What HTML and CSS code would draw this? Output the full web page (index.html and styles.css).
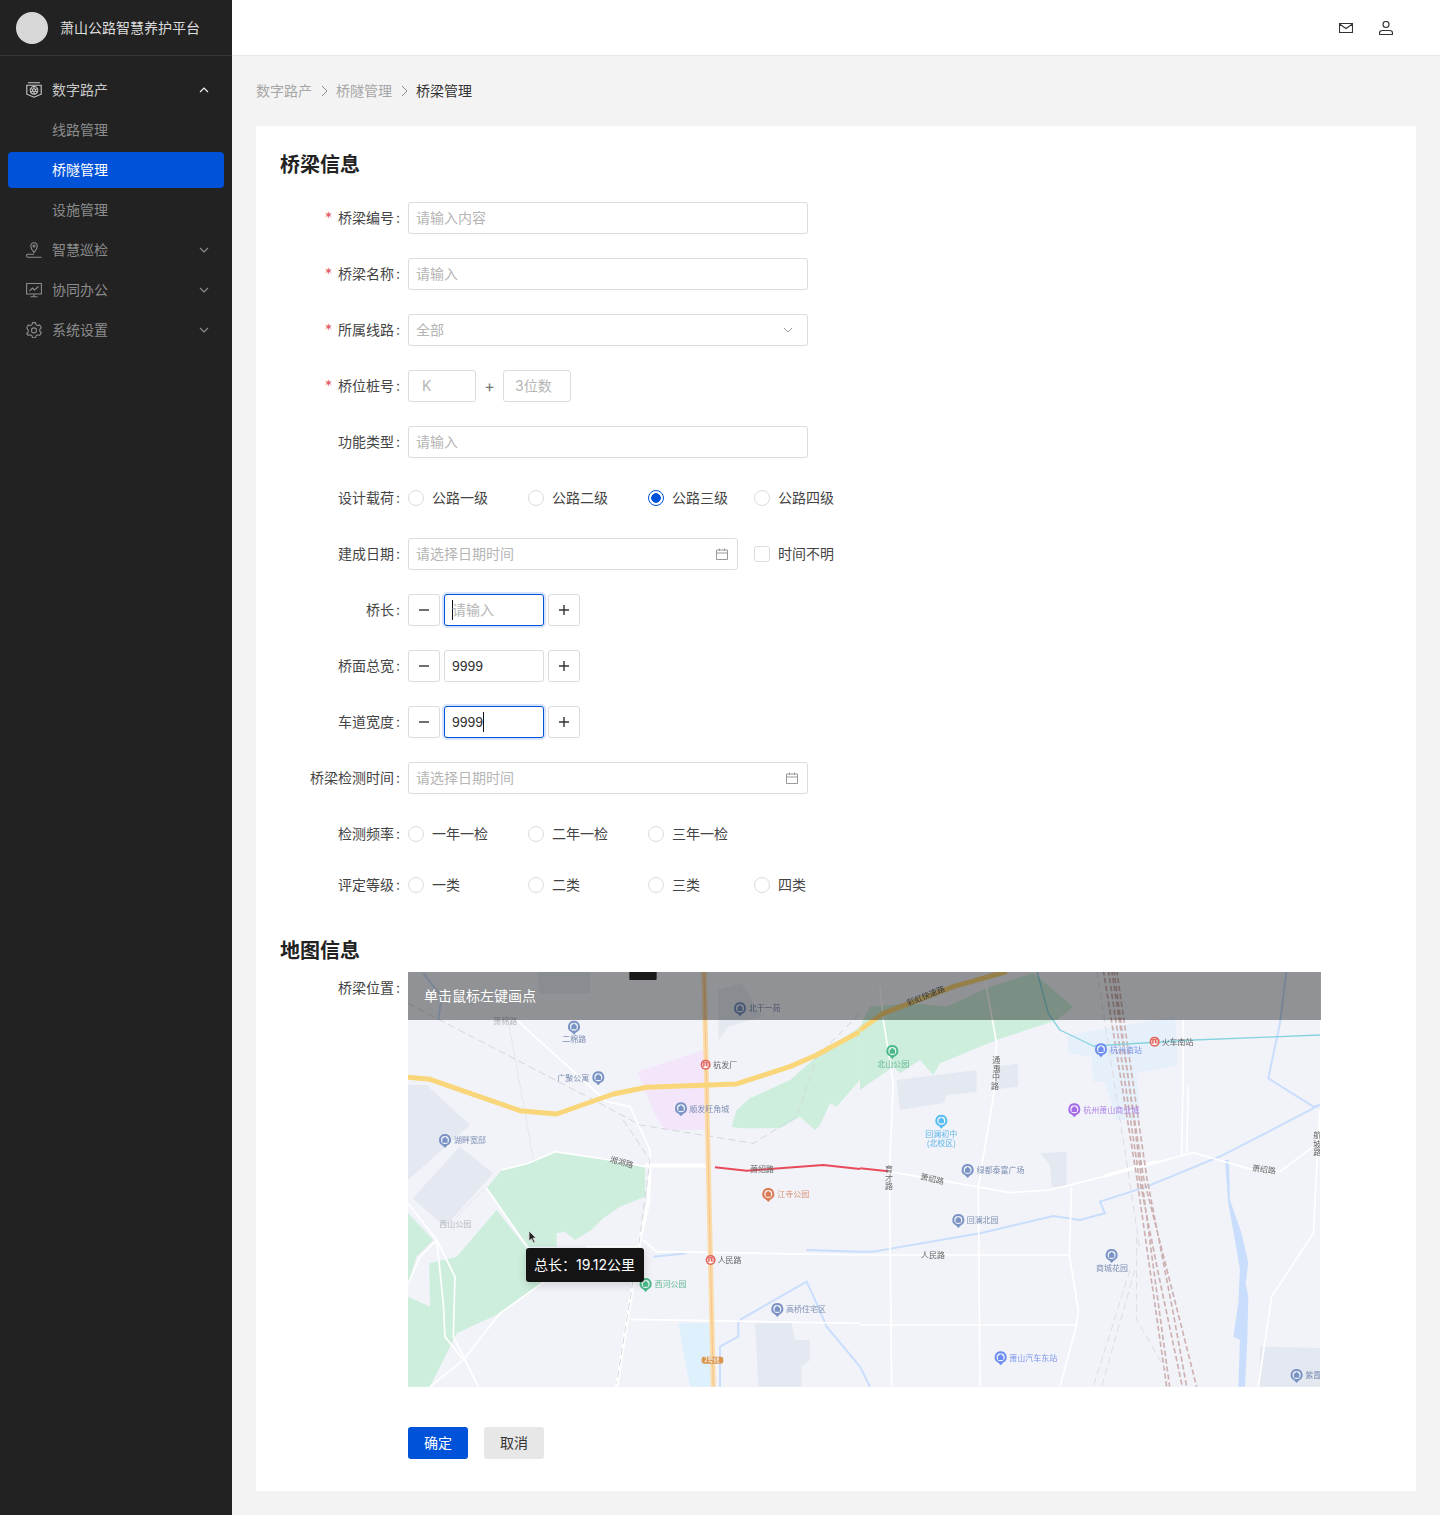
FILE: index.html
```html
<!DOCTYPE html>
<html lang="en">
<head>
  <meta charset="UTF-8" />
  <meta name="viewport" content="width=device-width, initial-scale=1.0"/>
  <title>萧山公路智慧养护平台</title>
  <link rel="stylesheet" href="styles.css">
</head>
<body>
  <aside class="sidebar">
    <div class="brand">
      <div class="avatar"></div>
      <span>萧山公路智慧养护平台</span>
    </div>
    <nav class="nav">
      <div class="nav-item open">
        <svg class="nav-icon" viewBox="0 0 16 16"><path d="M2 .8h12M.8 3.200h14.400v9L8 15.200l-7.200-3z"/><circle cx="8" cy="8.300" r="3.800"/><circle cx="8" cy="8.300" r="1.500"/><path d="M8 4.500v2.300M8 9.800v2.300M4.700 6.400l2 1.200M9.300 9l2 1.200M4.700 10.200l2-1.200M9.300 7.600l2-1.200"/></svg>
        <span>数字路产</span>
        <svg class="chevron" viewBox="0 0 10 6"><path d="M1 5l4-4 4 4"/></svg>
      </div>
      <div class="nav-item sub">线路管理</div>
      <div class="nav-item sub active">桥隧管理</div>
      <div class="nav-item sub">设施管理</div>
      <div class="nav-item">
        <svg class="nav-icon" viewBox="0 0 16 16"><path d="M8 10.500C6 8.500 4.800 6.800 4.800 4a3.200 3.200 0 0 1 6.400 0c0 2.800-1.200 4.500-3.200 6.500z"/><circle cx="8" cy="4" r="1"/><path d="M8 12.200H2a1.500 1.500 0 0 0 0 3h13.500"/></svg>
        <span>智慧巡检</span>
        <svg class="chevron" viewBox="0 0 10 6"><path d="M1 1l4 4 4-4"/></svg>
      </div>
      <div class="nav-item">
        <svg class="nav-icon" viewBox="0 0 16 16"><path d="M.6 1.500h14.800v10.500H.6zM8 12v2.800M4.500 14.800h7M3.500 9l3-3 2 2 4-3.500"/></svg>
        <span>协同办公</span>
        <svg class="chevron" viewBox="0 0 10 6"><path d="M1 1l4 4 4-4"/></svg>
      </div>
      <div class="nav-item">
        <svg class="nav-icon" viewBox="0 0 16 16"><path d="M6.500.6h3l.5 2 1.700 1 2-.6 1.600 2.800-1.500 1.400v2l1.500 1.400-1.600 2.800-2-.6-1.700 1-.5 2h-3l-.5-2-1.700-1-2 .6L.7 11.600l1.500-1.400v-2L.7 5.800l1.600-2.800 2 .6L6 2.600z"/><circle cx="8" cy="8.400" r="2.500"/></svg>
        <span>系统设置</span>
        <svg class="chevron" viewBox="0 0 10 6"><path d="M1 1l4 4 4-4"/></svg>
      </div>
    </nav>
  </aside>

  <div class="content">
    <header class="topbar">
      <svg class="top-icon mail" viewBox="0 0 14 10"><path d="M.5.500h13v9H.5zM.5 1l6.500 4.500L13.500 1"/></svg>
      <svg class="top-icon user" viewBox="0 0 14 14"><circle cx="7" cy="3.500" r="3"/><path d="M.5 13.500v-1.500c0-1.500 1.500-2.500 3-2.500h7c1.500 0 3 1 3 2.500v1.500z"/></svg>
    </header>

    <main class="main">
      <div class="breadcrumb">
        <span>数字路产</span>
        <svg class="crumb-sep" viewBox="0 0 24 12"><path d="M10 1l5 5-5 5"/></svg>
        <span>桥隧管理</span>
        <svg class="crumb-sep" viewBox="0 0 24 12"><path d="M10 1l5 5-5 5"/></svg>
        <span class="current">桥梁管理</span>
      </div>

      <section class="card">
        <h2 class="section-title">桥梁信息</h2>

        <div class="row">
          <label class="label required">桥梁编号<span>:</span></label>
          <div class="input wide placeholder">请输入内容</div>
        </div>
        <div class="row">
          <label class="label required">桥梁名称<span>:</span></label>
          <div class="input wide placeholder">请输入</div>
        </div>
        <div class="row">
          <label class="label required">所属线路<span>:</span></label>
          <div class="input wide placeholder">
            <span>全部</span>
            <svg class="select-arrow" viewBox="0 0 10 6"><path d="M1 1l4 4 4-4"/></svg>
          </div>
        </div>
        <div class="row">
          <label class="label required">桥位桩号<span>:</span></label>
          <div class="input short short-k placeholder">K</div>
          <span class="plus-sign">+</span>
          <div class="input short placeholder">3位数</div>
        </div>
        <div class="row">
          <label class="label">功能类型<span>:</span></label>
          <div class="input wide placeholder">请输入</div>
        </div>
        <div class="row">
          <label class="label">设计载荷<span>:</span></label>
          <div class="radios">
            <div class="radio"><i></i>公路一级</div>
            <div class="radio"><i></i>公路二级</div>
            <div class="radio checked"><i></i>公路三级</div>
            <div class="radio"><i></i>公路四级</div>
          </div>
        </div>
        <div class="row">
          <label class="label">建成日期<span>:</span></label>
          <div class="input date-short placeholder">
            <span>请选择日期时间</span>
            <svg class="calendar" viewBox="0 0 12 12"><path d="M.5 2h11v9.500H.5zM.5 5h11M3.500.5V3M8.500.5V3"/></svg>
          </div>
          <div class="checkbox"><i></i>时间不明</div>
        </div>
        <div class="row">
          <label class="label">桥长<span>:</span></label>
          <div class="stepper">
            <div class="step-btn"><svg class="step-icon" viewBox="0 0 10 10"><path d="M0 5h10"/></svg></div>
            <div class="input step-input focus placeholder"><b class="caret first"></b>请输入</div>
            <div class="step-btn"><svg class="step-icon" viewBox="0 0 10 10"><path d="M0 5h10M5 0v10"/></svg></div>
          </div>
        </div>
        <div class="row">
          <label class="label">桥面总宽<span>:</span></label>
          <div class="stepper">
            <div class="step-btn"><svg class="step-icon" viewBox="0 0 10 10"><path d="M0 5h10"/></svg></div>
            <div class="input step-input">9999</div>
            <div class="step-btn"><svg class="step-icon" viewBox="0 0 10 10"><path d="M0 5h10M5 0v10"/></svg></div>
          </div>
        </div>
        <div class="row">
          <label class="label">车道宽度<span>:</span></label>
          <div class="stepper">
            <div class="step-btn"><svg class="step-icon" viewBox="0 0 10 10"><path d="M0 5h10"/></svg></div>
            <div class="input step-input focus">9999<b class="caret"></b></div>
            <div class="step-btn"><svg class="step-icon" viewBox="0 0 10 10"><path d="M0 5h10M5 0v10"/></svg></div>
          </div>
        </div>
        <div class="row">
          <label class="label">桥梁检测时间<span>:</span></label>
          <div class="input wide placeholder">
            <span>请选择日期时间</span>
            <svg class="calendar" viewBox="0 0 12 12"><path d="M.5 2h11v9.500H.5zM.5 5h11M3.500.5V3M8.500.5V3"/></svg>
          </div>
        </div>
        <div class="row tight">
          <label class="label">检测频率<span>:</span></label>
          <div class="radios">
            <div class="radio"><i></i>一年一检</div>
            <div class="radio"><i></i>二年一检</div>
            <div class="radio"><i></i>三年一检</div>
          </div>
        </div>
        <div class="row last">
          <label class="label">评定等级<span>:</span></label>
          <div class="radios">
            <div class="radio"><i></i>一类</div>
            <div class="radio"><i></i>二类</div>
            <div class="radio"><i></i>三类</div>
            <div class="radio"><i></i>四类</div>
          </div>
        </div>

        <h2 class="section-title map-title">地图信息</h2>

        <div class="map-row">
          <label class="label">桥梁位置<span>:</span></label>
          <div class="map">
            <svg class="map-svg" viewBox="0 0 912 415">
              <defs>
                <symbol id="pin" viewBox="-20 -20 40 48" overflow="visible">
                  <path d="M0-18a18 18 0 0 1 7 34.600L0 24l-7-7.400A18 18 0 0 1 0-18z"/>
                  <circle r="12" fill="#fff" fill-opacity=".88"/>
                  <path d="M-8 8V-3L0-10l8 7V8z" fill="currentColor"/>
                </symbol>
                <symbol id="metro" viewBox="-18 -18 36 36" overflow="visible">
                  <circle r="15"/>
                  <circle r="10.500" fill="#fff"/>
                  <path d="M-7 7V-7H7V7M-2.500-7V5M2.500-7V5" fill="none" stroke="currentColor" stroke-width="3"/>
                </symbol>
              </defs>

              <!-- left half of the map -->
              <g transform="translate(-8,-2) scale(.3333)">
                <path class="block" d="M24 345h56l130 120L24 630z"/>
                <path class="block" d="M38 685L180 530l100 80-145 160z"/>
                <path class="block" d="M410 0h160v70l-150 0z"/>
                <path class="block" d="M955 60l70-20 60 100-100 30-30 40z"/>
                <path class="block" d="M1065 1060h110l10 50h45v60l-25 20v60h-130l-5-100z"/>
                <path class="water" d="M835 1060h105v190h-70z"/>
                <path class="pink" d="M712 305L910 240l10 240H795l-30-45z"/>
                <path class="green" d="M260 655l45-55 80-20 80-35 165 25 105 20v90l-75 30-50 35-35 35-50 30-30-25-25 5v40h-90z"/>
                <path class="green" d="M290 720l90 115 50 100-130 95-130 60-80 160H24V980l66 30-2-130 82-20z"/>
                <path class="green" d="M24 730l76 80-50 50-26 80z"/>
                <path class="green" d="M995 470l15-50 40-35 120-55 80-70 130-90v160l-70 80-20-10-30 65-15 15-45-40-60 35h-120z"/>
                <path class="river" d="M1380 845l-160-5M760 860l100-10M1020 1050l200-115 30 65 30 70 100 120"/>
                <path class="river" d="M960 1250v-120l55-30v-50M70 10l55 70-10 70"/>
                <path class="road" d="M24 700l86 110 55 110-5 180 75 150"/>
                <path class="road" d="M110 810l20 190 5 100 55 70M110 810l-50 50-35 80"/>
                <path class="road" d="M305 600l80-20 80-35 165 25 105 20h195M260 655l125 180M90 1250l100-80 110-140 140-100"/>
                <path class="road thick" d="M750 590l-5 110-25 110-70 440M735 585h180"/>
                <path class="road" d="M350 150l270 245 70 15 60 130v50M730 810l40 35 610 10M690 1048l690 12M558 830h165"/>
                <path class="rail" d="M24 100l576 300 120 65 340 55 130-80 60-180 130-130M670 450l80 120-30 230-70 440"/>
                <path class="rail dotted" d="M320 130l50 270 30 170M170 740l90-90"/>
                <path class="metro-base" d="M912 0l28 1250"/>
                <path class="metro-line" d="M912 0l28 1250"/>
                <path class="highway" d="M24 322l66 6 270 94 110 10 170-60 100-20 270-10 160-52 80-35 130-70"/>
                <path class="redline" d="M945 592l95 10 230-17 110 12"/>

                <rect class="badge-dark" x="688" y="-4" width="82" height="34" rx="3"/>
                <rect class="badge-line" x="905" y="1160" width="65" height="21" rx="7"/>
                <text class="map-text white" x="913" y="1177">2号线</text>

                <use href="#pin" class="pin blue" x="502" y="150" width="40" height="48"/>
                <use href="#pin" class="pin blue" x="575" y="302" width="40" height="48"/>
                <use href="#pin" class="pin blue" x="823" y="395" width="40" height="48"/>
                <use href="#pin" class="pin blue" x="115" y="490" width="40" height="48"/>
                <use href="#pin" class="pin blue" x="1000" y="95" width="40" height="48"/>
                <use href="#pin" class="pin blue" x="1112" y="997" width="40" height="48"/>
                <use href="#pin" class="pin orange" x="1085" y="652" width="40" height="48"/>
                <use href="#pin" class="pin green-pin" x="717" y="922" width="40" height="48"/>
                <use href="#metro" class="pin red" x="899" y="266" width="36" height="36"/>
                <use href="#metro" class="pin red" x="914" y="852" width="36" height="36"/>

                <text class="map-text grey" x="280" y="162">萧棉路</text>
                <text class="map-text blue-text" x="487" y="217">二棉路</text>
                <text class="map-text blue-text" x="472" y="332">广聚公寓</text>
                <text class="map-text dark" x="940" y="293">杭发厂</text>
                <text class="map-text blue-text" x="868" y="426">顺发旺角城</text>
                <text class="map-text blue-text" x="162" y="520">湖畔宽邸</text>
                <text class="map-text dark" transform="translate(628,575) rotate(16)">湘湖路</text>
                <text class="map-text dark" x="1050" y="607">萧绍路</text>
                <text class="map-text orange-text" x="1132" y="682">江寺公园</text>
                <text class="map-text grey" x="118" y="771">西山公园</text>
                <text class="map-text dark" x="953" y="880">人民路</text>
                <text class="map-text green-text" x="764" y="952">西河公园</text>
                <text class="map-text blue-text" x="1158" y="1027">高桥住宅区</text>
                <text class="map-text blue-text" x="1046" y="124">北干一苑</text>
              </g>

              <!-- right half of the map -->
              <g transform="translate(452,-2) scale(.3333)">
                <path class="green" d="M0 170l30-60 130-10 100 10 130-60 130-40 120 100-50 40-180 60-170 70-20 35-40-45-60 40-20-20-100 70z"/>
                <path class="block" d="M110 330l240-30v65l-90 10-10 25-130 20z"/>
                <path class="block" d="M410 290l65-10v70l-80 10z"/>
                <path class="block" d="M540 550l80-5v105h-45l-5-65z"/>
                <path class="block" d="M1200 1130l180 4v116h-180z"/>
                <path class="station" d="M625 195l320-55 10 145-125 25 10 140h-70l-35-115h-35l-5-75-70-10z"/>
                <path class="river" d="M1280 0l-20 160-35 165 135 85 20-5"/>
                <path class="river" d="M1380 405l-290 150-230 95-140 45 15 35-75 20-80-12-220 52L40 845H0"/>
                <path class="river-fill" d="M1095 570h12l3 120 35 100 20 90-8 60 8 40-3 130-7 140h-20l5-140-20-10 15-100 5-100-15-90-20-110z"/>
                <path class="river" d="M0 1190l30 60"/>
                <path class="road" d="M60 50l10 100 30 190-12 260 7 650M370 0l40 220-10 160-45 270 5 600"/>
                <path class="road" d="M88 605l262 45 100 18 120-8 160-40 270-72 180 52 80 5 100-75 20-30"/>
                <path class="road" d="M0 855h630M635 650l-7 205 27 165-5 45-50 185M0 1065h650"/>
                <path class="road" d="M970 150v140l-5 265M985 350l-5 200M1380 420l-20 370-125 190-40 270"/>
                <path class="road thick" d="M735 618l155-43"/>
                <path class="rail brown" d="M730 0l100 620 90 630M755 0l95 620 160 630M770 0l90 620 80 410 40 220M745 0l92 620 60 300 70 330M762 0l82 620 40 300 45 330"/>
                <path class="rail light" d="M710 0l100 640 30 200M810 900l-110 350M825 900l-100 350M830 800v250l100 170"/>
                <path class="cyan" d="M530 0l35 130 35 50 100 48 300-18 380-15"/>
                <path class="highway" d="M0 180l70-50 210-80 160-45"/>
                <path class="redline" d="M0 595l85 9"/>

                <use href="#pin" class="pin green-pin" x="77" y="223" width="40" height="48"/>
                <use href="#pin" class="pin sky" x="224" y="432" width="40" height="48"/>
                <use href="#pin" class="pin blue" x="303" y="580" width="40" height="48"/>
                <use href="#pin" class="pin blue" x="275" y="730" width="40" height="48"/>
                <use href="#pin" class="pin blue" x="735" y="835" width="40" height="48"/>
                <use href="#pin" class="pin indigo" x="402" y="1142" width="40" height="48"/>
                <use href="#pin" class="pin indigo" x="703" y="218" width="40" height="48"/>
                <use href="#metro" class="pin red" x="866" y="197" width="36" height="36"/>
                <use href="#pin" class="pin purple" x="623" y="398" width="40" height="48"/>
                <use href="#pin" class="pin blue" x="1290" y="1195" width="40" height="48"/>

                <text class="map-text dark" transform="translate(145,108) rotate(-22)">彩虹快速路</text>
                <text class="map-text green-text" x="52" y="292">北山公园</text>
                <text class="map-text dark"><tspan x="397" y="279">通</tspan><tspan x="398" y="305">惠</tspan><tspan x="396" y="331">中</tspan><tspan x="393" y="357">路</tspan></text>
                <text class="map-text sky-text" x="196" y="500">回澜初中</text>
                <text class="map-text sky-text" x="200" y="529">(北校区)</text>
                <text class="map-text blue-text" x="350" y="610">绿都泰富广场</text>
                <text class="map-text dark" transform="translate(180,628) rotate(12)">萧绍路</text>
                <text class="map-text dark"><tspan x="75" y="606">育</tspan><tspan x="75" y="632">才</tspan><tspan x="75" y="658">路</tspan></text>
                <text class="map-text blue-text" x="320" y="760">回澜北园</text>
                <text class="map-text dark" x="183" y="865">人民路</text>
                <text class="map-text blue-text" x="708" y="903">商城花园</text>
                <text class="map-text indigo-text" x="448" y="1173">萧山汽车东站</text>
                <text class="map-text indigo-text" x="750" y="248">杭州南站</text>
                <text class="map-text dark" x="905" y="224">火车南站</text>
                <text class="map-text purple-text" x="670" y="428">杭州萧山商业城</text>
                <text class="map-text dark" transform="translate(1175,602) rotate(8)">萧绍路</text>
                <text class="map-text dark"><tspan x="1360" y="504">航</tspan><tspan x="1360" y="530">坡</tspan><tspan x="1360" y="556">路</tspan></text>
                <text class="map-text blue-text" x="1336" y="1225">紫霞</text>
              </g>
            </svg>
            <div class="map-hint">单击鼠标左键画点</div>
            <svg class="map-cursor" viewBox="0 0 9 14"><path d="M1 1v10l2.500-2.200L5.500 13l1.500-.7-2-4.200h3z"/></svg>
            <div class="map-tip">总长：19.12公里</div>
          </div>
        </div>

        <div class="actions">
          <button class="btn primary">确定</button>
          <button class="btn">取消</button>
        </div>
      </section>
    </main>
  </div>
</body>
</html>
```

FILE: styles.css
```css
* {
  box-sizing: border-box;
}

body {
  margin: 0;
  display: flex;
  min-height: 1515px;
  font-family: Inter, "Noto Sans CJK SC", sans-serif;
  font-size: 14px;
  line-height: 22px;
  color: #333;
  background: #f3f3f3;
}

/* sidebar */
.sidebar {
  width: 232px;
  flex-shrink: 0;
  background: #222;
}

.brand {
  height: 56px;
  display: flex;
  align-items: center;
  gap: 12px;
  padding-left: 16px;
  border-bottom: 1px solid #383838;
  color: #ddd;
}

.avatar {
  width: 32px;
  height: 32px;
  border-radius: 50%;
  background: #d8d8d8;
}

.nav {
  padding: 16px 8px 0;
}

.nav-item {
  position: relative;
  height: 36px;
  margin-bottom: 4px;
  display: flex;
  align-items: center;
  gap: 10px;
  padding-left: 18px;
  border-radius: 4px;
  color: #8c8c8c;
}

.nav-item.open {
  color: #c8c8c8;
}

.nav-item.sub {
  padding-left: 44px;
}

.nav-item.active {
  background: #0052d9;
  color: #fff;
}

.nav-icon {
  width: 16px;
  height: 16px;
  fill: none;
  stroke: currentColor;
  stroke-width: 1.1;
}

.chevron {
  position: absolute;
  right: 15px;
  top: 15px;
  width: 10px;
  height: 6px;
  fill: none;
  stroke: currentColor;
  stroke-width: 1.2;
}

.open .chevron {
  stroke: #eee;
}

/* top bar */
.content {
  flex: 1;
  min-width: 0;
}

.topbar {
  height: 56px;
  display: flex;
  align-items: center;
  justify-content: flex-end;
  gap: 26px;
  padding-right: 47px;
  background: #fff;
  border-bottom: 1px solid #e7e7e7;
}

.top-icon {
  fill: none;
  stroke: #333;
  stroke-width: 1.1;
  width: 14px;
}

.top-icon.mail {
  height: 10px;
}

.top-icon.user {
  height: 14px;
}

/* main */
.main {
  padding: 24px 24px 24px;
}

.breadcrumb {
  display: flex;
  align-items: center;
  height: 22px;
  margin-bottom: 24px;
  color: #a6a6a6;
}

.crumb-sep {
  width: 24px;
  height: 12px;
  fill: none;
  stroke: #8c8c8c;
  stroke-width: 1;
}

.breadcrumb .current {
  color: #333;
}

.card {
  background: #fff;
  padding: 24px 24px 32px;
}

.section-title {
  margin: 0 0 23px;
  padding-top: 1px;
  font-size: 20px;
  line-height: 28px;
  font-weight: 600;
  color: #222;
}

.map-title {
  margin: 35px 0 7px;
}

/* form rows */
.row {
  display: flex;
  align-items: center;
  height: 32px;
  margin-bottom: 24px;
}

.row.tight {
  margin-bottom: 19px;
}

.row.last {
  margin-bottom: 0;
}

.label {
  width: 120px;
  flex-shrink: 0;
  margin-right: 8px;
  text-align: right;
  color: #444;
}

.label span {
  margin-left: 2px;
}

.required::before {
  content: "*";
  margin-right: 6px;
  color: #e34d59;
}

.input {
  height: 32px;
  display: flex;
  align-items: center;
  padding: 0 7px;
  border: 1px solid #dcdcdc;
  border-radius: 3px;
  background: #fff;
  color: #333;
}

.placeholder {
  color: #b5b5b5;
}

.wide {
  width: 400px;
  justify-content: space-between;
}

.date-short {
  width: 330px;
  justify-content: space-between;
}

.short {
  width: 68px;
  padding-left: 11px;
}

.short-k {
  padding-left: 13px;
}

.plus-sign {
  width: 27px;
  text-align: center;
  font-size: 16px;
  color: #777;
}

.select-arrow {
  width: 10px;
  height: 6px;
  margin-right: 7px;
  fill: none;
  stroke: #999;
  stroke-width: 1;
}

.calendar {
  width: 12px;
  height: 12px;
  margin-right: 2px;
  fill: none;
  stroke: #999;
  stroke-width: 1;
}

/* radios */
.radios {
  display: grid;
  grid-template-columns: 120px 120px 106px auto;
}

.radio,
.checkbox {
  display: flex;
  align-items: center;
  gap: 8px;
  color: #444;
  white-space: nowrap;
}

.radio i {
  width: 16px;
  height: 16px;
  border: 1px solid #dcdcdc;
  border-radius: 50%;
}

.radio.checked i {
  border-color: #0052d9;
  background: radial-gradient(circle, #0052d9 4.5px, #fff 5px);
}

.checkbox {
  margin-left: 16px;
}

.checkbox i {
  width: 16px;
  height: 16px;
  border: 1px solid #dcdcdc;
  border-radius: 3px;
}

/* number stepper */
.stepper {
  display: flex;
  gap: 4px;
}

.step-btn {
  width: 32px;
  height: 32px;
  display: flex;
  align-items: center;
  justify-content: center;
  border: 1px solid #dcdcdc;
  border-radius: 3px;
}

.step-icon {
  width: 10px;
  height: 10px;
  fill: none;
  stroke: #333;
  stroke-width: 1.4;
}

.step-input {
  width: 100px;
  font-family: "Liberation Sans", "Noto Sans CJK SC", sans-serif;
}

.focus {
  border-color: #0052d9;
  box-shadow: 0 0 0 2px rgba(0, 82, 217, .16);
}

.caret {
  width: 1px;
  height: 20px;
  background: #111;
  flex-shrink: 0;
}

.caret.first {
  margin-right: -1px;
}

/* map */
.map-row {
  display: flex;
}

.map-row .label {
  line-height: 32px;
}

.map {
  position: relative;
  width: 913px;
  height: 415px;
  overflow: hidden;
}

.map-svg {
  display: block;
  width: 912px;
  height: 415px;
  background: #f1f3f9;
  filter: blur(.35px);
}

.block { fill: #e4e9f1; }
.water { fill: #dff0fd; }
.station { fill: #e6f0fa; }
.pink { fill: #f3e6fb; }
.green { fill: #cdeedd; }
.river-fill { fill: #c9defc; }

.river,
.road,
.rail,
.metro-base,
.metro-line,
.highway,
.redline,
.cyan {
  fill: none;
  stroke-linejoin: round;
}

.river { stroke: #c9defc; stroke-width: 6; }
.road { stroke: #fff; stroke-width: 5; }
.road.thick { stroke-width: 10; }
.rail { stroke: #d3d6dc; stroke-width: 3; stroke-dasharray: 22 12; }
.rail.dotted { stroke-dasharray: 3 4; }
.rail.brown { stroke: #cdb1b0; stroke-width: 5; stroke-dasharray: 16 8; }
.rail.light { stroke: #dcdde2; stroke-width: 3; }
.metro-base { stroke: #fbdca8; stroke-width: 15; }
.metro-line { stroke: #f3b77f; stroke-width: 2; }
.highway { stroke: #fad67a; stroke-width: 15; }
.redline { stroke: #e84a5a; stroke-width: 6; }
.cyan { stroke: #86d3de; stroke-width: 4; }
.badge-dark { fill: #2c2c2c; }
.badge-line { fill: #d9964f; }

.pin { color: #7a93c4; fill: #7a93c4; }
.pin.orange { color: #d97a55; fill: #d97a55; }
.pin.green-pin { color: #4cb98a; fill: #4cb98a; }
.pin.red { color: #e0625a; fill: #e0625a; }
.pin.sky { color: #5bbcf0; fill: #5bbcf0; }
.pin.indigo { color: #6d8df0; fill: #6d8df0; }
.pin.purple { color: #a56be8; fill: #a56be8; }

.map-text {
  font-size: 24px;
  font-family: "Noto Sans CJK SC", sans-serif;
}

.map-text.white { fill: #fff; font-size: 18px; }
.map-text.grey { fill: #b3b6bb; }
.map-text.dark { fill: #666; }
.map-text.blue-text { fill: #7f8fb3; }
.map-text.orange-text { fill: #d98f70; }
.map-text.green-text { fill: #62b892; }
.map-text.sky-text { fill: #5fb6e6; }
.map-text.indigo-text { fill: #7a94ea; }
.map-text.purple-text { fill: #ae82e6; }

.map-hint {
  position: absolute;
  left: 0;
  top: 0;
  right: 0;
  height: 48px;
  padding-left: 16px;
  line-height: 48px;
  color: #fff;
  background: rgba(0, 0, 0, .4);
}

.map-cursor {
  position: absolute;
  left: 120px;
  top: 258px;
  width: 9px;
  height: 14px;
  fill: #222;
  stroke: #ddd;
  stroke-width: .8;
}

.map-tip {
  position: absolute;
  left: 118px;
  top: 276px;
  width: 118px;
  height: 34px;
  padding: 0 8px;
  line-height: 34px;
  white-space: nowrap;
  color: #fff;
  background: #141414;
  border-radius: 3px;
  box-shadow: 0 3px 10px rgba(0, 0, 0, .15);
}

/* buttons */
.actions {
  display: flex;
  gap: 16px;
  margin: 40px 0 0 128px;
}

.btn {
  width: 60px;
  height: 32px;
  padding: 0;
  border: none;
  border-radius: 3px;
  font: inherit;
  color: #333;
  background: #e7e7e7;
}

.btn.primary {
  color: #fff;
  background: #0052d9;
}
```
